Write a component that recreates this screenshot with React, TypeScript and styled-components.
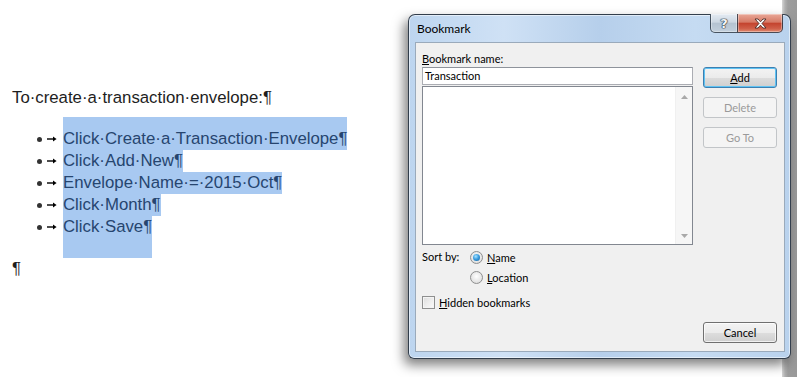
import React from "react";
import styled, { createGlobalStyle, css } from "styled-components";

const GlobalStyle = createGlobalStyle`
  html, body {
    margin: 0;
    padding: 0;
    background: #ffffff;
  }
  * {
    box-sizing: border-box;
  }
`;

const Page = styled.div`
  position: relative;
  width: 797px;
  height: 377px;
  overflow: hidden;
  background: #ffffff;
`;

// ---- Word document ----
const Doc = styled.div`
  padding: 87px 0 0 12px;
  font-family: "Liberation Sans", Arial, sans-serif;
  font-size: 16.8px;
  line-height: 22px;
  color: #1e1e1e;
`;

const Para = styled.div<{ $after?: number }>`
  height: 22px;
  margin-bottom: ${(p) => p.$after ?? 0}px;
  white-space: pre;
`;

const List = styled.div`
  display: flex;
  flex-direction: column;
`;

const Item = styled.div`
  display: grid;
  grid-template-columns: 51px auto;
  justify-content: start;
`;

const Marker = styled.span<{ $before: number; $after: number }>`
  display: flex;
  align-items: center;
  gap: 5px;
  padding: ${(p) => p.$before}px 0 ${(p) => p.$after}px 25px;
  height: ${(p) => 22 + p.$before + p.$after}px;
`;

const Dot = styled.span`
  width: 5px;
  height: 5px;
  border-radius: 50%;
  background: #333333;
`;

const Selected = styled.span<{ $before: number; $after: number }>`
  display: block;
  padding: ${(p) => p.$before}px 0 ${(p) => p.$after}px 0;
  background: #a8c9f1;
  color: #26456f;
  white-space: pre;
`;

const TabArrow = () => (
  <svg width="10" height="6" viewBox="0 0 10 6">
    <path d="M0 3h7" stroke="#000" strokeWidth="1.4" />
    <path d="M6 0.5L9.6 3L6 5.5z" fill="#000" />
  </svg>
);

const items = [
  "Click·Create·a·Transaction·Envelope¶",
  "Click·Add·New¶",
  "Envelope·Name·=·2015·Oct¶",
  "Click·Month¶",
  "Click·Save¶",
];

// ---- window behind the dialog ----
const BackWindow = styled.div`
  position: absolute;
  top: 0;
  right: 0;
  width: 15px;
  height: 100%;
  background: linear-gradient(to right, #d6d6d6 0, #b0b0b0 3px, #9d9d9d 6px, #999999 100%);
`;

// ---- Bookmark dialog ----
const Dialog = styled.div`
  position: absolute;
  left: 408px;
  top: 14px;
  width: 383px;
  height: 345px;
  display: flex;
  flex-direction: column;
  border: 1px solid rgba(35, 45, 58, 0.9);
  border-radius: 7px 7px 6px 6px;
  background: linear-gradient(
    to right,
    #bdd5ef 0%,
    #cfe1f5 25%,
    #b6cfeb 50%,
    #c5dbf2 75%,
    #b9d2ed 100%
  );
  box-shadow: inset 0 0 0 1px rgba(255, 255, 255, 0.55),
    -4px 6px 12px rgba(0, 0, 0, 0.5);
  font-family: Lato, "Liberation Sans", sans-serif;
  font-size: 11px;
  color: #000000;
`;

const TitleBar = styled.div`
  height: 27px;
  display: flex;
  align-items: flex-start;
  justify-content: space-between;
  padding-left: 8px;
  padding-right: 7px;
`;

const Title = styled.span`
  font-size: 12px;
  line-height: 27px;
  color: #000000;
`;

const Captions = styled.div`
  display: flex;
  margin-top: -1px;
`;

const CaptionButton = styled.div<{ $close?: boolean }>`
  height: 19px;
  display: flex;
  align-items: center;
  justify-content: center;
  border: 1px solid rgba(45, 58, 72, 0.85);
  border-top: none;
  box-shadow: inset 0 0 0 1px rgba(255, 255, 255, 0.35);
  ${(p) =>
    p.$close
      ? css`
          width: 46px;
          border-radius: 0 0 5px 0;
          background: linear-gradient(#e9a898 0%, #d67a66 45%, #c4442f 52%, #cf5e48 80%, #e08a70 100%);
        `
      : css`
          width: 27px;
          border-right: none;
          border-radius: 0 0 0 5px;
          background: linear-gradient(#e4ebf2 0%, #ccd7e2 45%, #b5c3d1 52%, #c2cfdc 100%);
        `}
`;

const HelpGlyph = styled.span`
  font-family: "DejaVu Sans", sans-serif;
  font-weight: bold;
  font-size: 13px;
  line-height: 13px;
  color: #f4f6f8;
  text-shadow: 0 0 1px #2a3440, 0 0 1px #2a3440, 0 0 1px #2a3440, 0 0 1px #2a3440;
`;

const CloseGlyph = () => (
  <svg width="15" height="11" viewBox="0 0 15 11">
    <path
      d="M2 1h3l2.5 2.8L10 1h3l-4 4.5 4 4.5h-3L7.5 7.2 5 10H2l4-4.5z"
      fill="#ffffff"
      stroke="#4a2a26"
      strokeWidth="0.9"
      strokeLinejoin="round"
    />
  </svg>
);

const Client = styled.div`
  flex: 1;
  margin: 0 5px 6px 6px;
  border: 1px solid #9aaabb;
  background: #f0f0f0;
  display: grid;
  grid-template-columns: 271px 74px;
  column-gap: 10px;
  padding: 0 7px 0 6px;
`;

const LeftCol = styled.div`
  display: flex;
  flex-direction: column;
  padding-top: 8px;
`;

const RightCol = styled.div`
  display: flex;
  flex-direction: column;
  padding: 24px 0 8px;
`;

const Label = styled.div`
  line-height: 15px;
  height: 15px;
`;

const TextBox = styled.div`
  margin-top: 1px;
  height: 18px;
  border: 1px solid #abadb3;
  border-top-color: #8e939b;
  background: #ffffff;
  padding-left: 2px;
  line-height: 16px;
`;

const ListBox = styled.div`
  margin-top: 1px;
  height: 159px;
  border: 1px solid #828790;
  background: #ffffff;
  display: flex;
  justify-content: flex-end;
`;

const ScrollTrack = styled.div`
  width: 17px;
  background: #f6f6f6;
  border-left: 1px solid #f0f0f0;
  display: flex;
  flex-direction: column;
  justify-content: space-between;
  align-items: center;
  padding: 8px 0 6px;
`;

const ScrollArrow = ({ down }: { down?: boolean }) => (
  <svg width="7" height="4" viewBox="0 0 7 4">
    <path d={down ? "M0 0h7L3.5 4z" : "M0 4h7L3.5 0z"} fill="#a9a9a9" />
  </svg>
);

const SortRow = styled.div`
  margin-top: 2px;
  display: grid;
  grid-template-columns: 48px auto;
`;

const OptionLabel = styled.div`
  line-height: 20px;
  height: 20px;
`;

const Options = styled.div`
  display: flex;
  flex-direction: column;
`;

const Option = styled.label`
  display: flex;
  align-items: center;
  gap: 4px;
  height: 20px;
`;

const Radio = styled.span<{ $checked?: boolean }>`
  width: 13px;
  height: 13px;
  border-radius: 50%;
  border: 1px solid #8e8f8f;
  background: radial-gradient(circle at 50% 40%, #ffffff 0%, #e6e6e6 60%, #d4d4d4 100%);
  display: flex;
  align-items: center;
  justify-content: center;
  &::after {
    content: "";
    display: ${(p) => (p.$checked ? "block" : "none")};
    width: 7px;
    height: 7px;
    border-radius: 50%;
    background: radial-gradient(circle at 40% 35%, #a9e4ff 0%, #3c9ee0 45%, #0f5c99 100%);
  }
`;

const CheckRow = styled(Option)`
  margin-top: 5px;
`;

const CheckBox = styled.span`
  width: 13px;
  height: 13px;
  border: 1px solid #8e8f8f;
  background: linear-gradient(135deg, #dcdcdc 0%, #ededed 50%, #fbfbfb 100%);
  box-shadow: inset 0 0 0 1px #f4f4f4;
`;

const Button = styled.div<{ $default?: boolean; $disabled?: boolean }>`
  width: 74px;
  height: 21px;
  border-radius: 3px;
  display: flex;
  align-items: center;
  justify-content: center;
  border: 1px solid ${(p) => (p.$disabled ? "#c2c5c8" : p.$default ? "#3c7fb1" : "#707070")};
  color: ${(p) => (p.$disabled ? "#9a9a9a" : "#000000")};
  background: ${(p) =>
    p.$disabled
      ? "#f4f4f4"
      : "linear-gradient(#f3f3f3 0%, #ebebeb 50%, #dddddd 51%, #cfcfcf 100%)"};
  box-shadow: ${(p) =>
    p.$disabled
      ? "none"
      : p.$default
      ? "inset 0 0 0 1px #5fc3f3"
      : "inset 0 0 0 1px rgba(255,255,255,0.7)"};
  & + & {
    margin-top: 9px;
  }
`;

const CancelButton = styled(Button)`
  margin-top: auto !important;
`;

export default function App() {
  return (
    <Page>
      <GlobalStyle />
      <Doc>
        <Para $after={8}>To·create·a·transaction·envelope:¶</Para>
        <List>
          {items.map((t, i) => {
            const before = i === 0 ? 11 : 0;
            const after = i === items.length - 1 ? 20 : 0;
            return (
              <Item key={t}>
                <Marker $before={before} $after={after}>
                  <Dot />
                  <TabArrow />
                </Marker>
                <Selected $before={before} $after={after}>
                  {t}
                </Selected>
              </Item>
            );
          })}
        </List>
        <Para>¶</Para>
      </Doc>

      <BackWindow />

      <Dialog>
        <TitleBar>
          <Title>Bookmark</Title>
          <Captions>
            <CaptionButton>
              <HelpGlyph>?</HelpGlyph>
            </CaptionButton>
            <CaptionButton $close>
              <CloseGlyph />
            </CaptionButton>
          </Captions>
        </TitleBar>
        <Client>
          <LeftCol>
            <Label>
              <u>B</u>ookmark name:
            </Label>
            <TextBox>Transaction</TextBox>
            <ListBox>
              <ScrollTrack>
                <ScrollArrow />
                <ScrollArrow down />
              </ScrollTrack>
            </ListBox>
            <SortRow>
              <OptionLabel>Sort by:</OptionLabel>
              <Options>
                <Option>
                  <Radio $checked />
                  <span>
                    <u>N</u>ame
                  </span>
                </Option>
                <Option>
                  <Radio />
                  <span>
                    <u>L</u>ocation
                  </span>
                </Option>
              </Options>
            </SortRow>
            <CheckRow>
              <CheckBox />
              <span>
                <u>H</u>idden bookmarks
              </span>
            </CheckRow>
          </LeftCol>
          <RightCol>
            <Button $default>
              <span>
                <u>A</u>dd
              </span>
            </Button>
            <Button $disabled>Delete</Button>
            <Button $disabled>Go To</Button>
            <CancelButton>Cancel</CancelButton>
          </RightCol>
        </Client>
      </Dialog>
    </Page>
  );
}
